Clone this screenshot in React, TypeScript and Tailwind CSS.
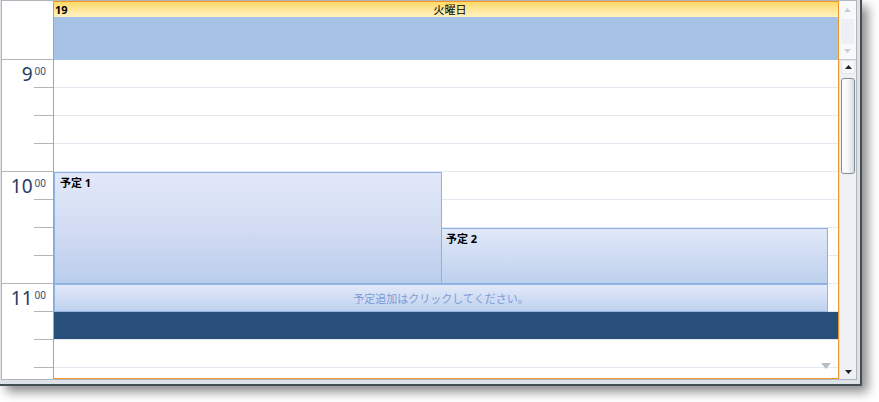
import React from "react";

function Tri({ dir, color, w = 7, h = 4 }: { dir: "up" | "down"; color: string; w?: number; h?: number }) {
  const pts = dir === "up" ? `0,${h} ${w},${h} ${w / 2},0` : `0,0 ${w},0 ${w / 2},${h}`;
  return (
    <svg width={w} height={h} viewBox={`0 0 ${w} ${h}`}>
      <polygon points={pts} fill={color} />
    </svg>
  );
}

function HourBlock({ h }: { h: string }) {
  return (
    <div className="shrink-0 flex flex-col">
      <div className="h-[28px] flex flex-col">
        <div className="h-[27px] flex justify-end items-start pr-[7px] pt-[5px] text-[#1f3d63]">
          <span className="text-[19px] leading-[19px]">{h}</span>
          <span className="text-[10px] leading-[10px] ml-[2px] mt-[1px] text-[#2f4f78]">00</span>
        </div>
        <div className="h-px w-[19px] self-end bg-[#b5b5b5]" />
      </div>
      <div className="h-[28px] flex flex-col justify-end items-end">
        <div className="h-px w-[19px] bg-[#b5b5b5]" />
      </div>
      <div className="h-[28px] flex flex-col justify-end items-end">
        <div className="h-px w-[19px] bg-[#b5b5b5]" />
      </div>
      <div className="h-[28px] border-b border-[#b5b5b5]" />
    </div>
  );
}

export default function App() {
  const rows = Array.from({ length: 12 });
  return (
    <div className="w-[879px] h-[402px] bg-white overflow-hidden font-['Noto_Sans','Noto_Sans_CJK_JP',sans-serif]">
      <div className="w-[862px] h-[386px] bg-[#dde2e8] border-r-2 border-b-2 border-[#454e53] shadow-[6px_6px_10px_rgba(0,0,0,0.45)] pl-px">
        <div className="w-[856px] h-[380px] border border-[#b2b6bb] bg-white flex">
          {/* time ruler */}
          <div className="w-[51px] shrink-0 flex flex-col overflow-hidden">
            <div className="h-[59px] shrink-0 border-b border-[#b5b5b5]" />
            <HourBlock h="9" />
            <HourBlock h="10" />
            <HourBlock h="11" />
          </div>

          {/* main */}
          <div className="w-[786px] shrink-0 border border-[#f0962b] flex flex-col">
            <div className="h-[15px] shrink-0 bg-linear-to-b from-[#ffd965] to-[#fff2c2] grid grid-cols-[1fr_auto_1fr] items-center text-black">
              <span className="text-[11px] leading-[15px] font-bold pl-[1px]">19</span>
              <span className="text-[11px] leading-[15px] ml-[8px]">火曜日</span>
              <span />
            </div>
            <div className="h-[43px] shrink-0 bg-[#a6c3e6]" />
            <div className="h-[318px] shrink-0 relative overflow-hidden flex flex-col">
              {rows.map((_, i) => (
                <div key={i} className="h-[28px] shrink-0 border-b border-[#e3e9f1]" />
              ))}

              <div className="absolute left-0 top-[112px] w-[388px] h-[112px] border border-[#8fb0e2] bg-linear-to-b from-[#e1e8f9] via-[#d3dcf2] to-[#b9ceec] pl-[5px] pt-[3px] text-[11px] leading-[13px] font-bold text-black">
                予定 1
              </div>
              <div className="absolute left-[387px] top-[168px] w-[387px] h-[56px] border border-[#8fb0e2] bg-linear-to-b from-[#e1e8f9] to-[#bed1ed] pl-[4px] pt-[3px] text-[11px] leading-[13px] font-bold text-black">
                予定 2
              </div>
              <div className="absolute left-0 top-[224px] w-[774px] h-[28px] border border-[#93b3e3] bg-linear-to-b from-[#e3e9fa] to-[#bfd1ee] flex items-center justify-center text-[11px] leading-[13px] text-[#7b9bd6]">
                予定追加はクリックしてください。
              </div>
              <div className="absolute left-0 top-[252px] w-full h-[27px] bg-[#284f7a]" />
              <div className="absolute left-[767px] top-[303px] flex">
                <Tri dir="down" color="#b8bdc4" w={10} h={6} />
              </div>
            </div>
          </div>

          {/* scrollbars */}
          <div className="w-[17px] shrink-0 flex flex-col">
            <div className="h-[59px] shrink-0 bg-[#f8f9fb] border-b border-[#c6cad1] flex flex-col items-center">
              <div className="h-[18px] shrink-0 flex items-center justify-center">
                <Tri dir="up" color="#c9cdd3" w={7} h={4} />
              </div>
              <div className="h-[25px] w-[13px] shrink-0 bg-[#eef0f7]" />
              <div className="h-[14px] shrink-0 flex items-center justify-center">
                <Tri dir="down" color="#c9cdd3" w={7} h={4} />
              </div>
            </div>
            <div className="flex-1 bg-[#eff0f5] border-l border-[#dfe2e8] flex flex-col items-center">
              <div className="h-[14px] w-[14px] shrink-0 flex items-center justify-center border border-[#e2e5ea] bg-[#f6f7fa]">
                <Tri dir="up" color="#222" w={7} h={4} />
              </div>
              <div className="mt-[4px] h-[96px] w-[14px] shrink-0 rounded-[3px] border border-[#7f8b99] bg-linear-to-r from-white via-[#f4f5f8] to-[#d9dde5]" />
              <div className="flex-1" />
              <div className="h-[14px] w-[14px] shrink-0 flex items-center justify-center">
                <Tri dir="down" color="#222" w={7} h={4} />
              </div>
            </div>
          </div>
        </div>
      </div>
    </div>
  );
}
